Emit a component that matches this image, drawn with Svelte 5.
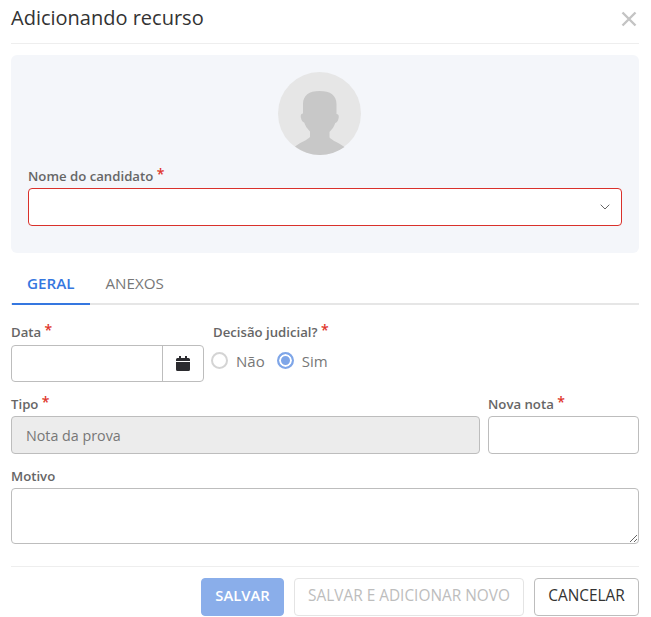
<script lang="ts">
	let decisao = $state('sim');
	let tab = $state('geral');
</script>

<div class="modal">
	<header class="modal-header">
		<h2 class="modal-title">Adicionando recurso</h2>
		<button class="close-btn" aria-label="Fechar">
			<svg width="16" height="16" viewBox="0 0 16 16">
				<path d="M1.500 1.500l13 13M14.500 1.500l-13 13" stroke="#c4c4c4" stroke-width="2.400" fill="none" />
			</svg>
		</button>
	</header>

	<section class="candidate">
		<div class="avatar">
			<svg width="83" height="83" viewBox="0 0 83 83">
				<circle cx="41.500" cy="41.500" r="41.500" fill="#e6e6e6" />
				<path
					d="M41.500 19c-10.500 0-16.500 4.500-16.500 13v9.500c-2 0-2.600 1.800-2.100 4.300.5 2.700 1.700 4.400 3.300 4.800 1 3.200 3 6.300 5.800 8.900v5.500c-2.500 3-9 5-15 9.500A41.500 41.500 0 0 0 66.500 75c-6-4.500-12.500-6.500-15-9.500v-5.500c2.800-2.600 4.800-5.700 5.800-8.900 1.600-.4 2.800-2.100 3.300-4.800.5-2.500-.1-4.300-2.100-4.300V32c0-8.500-6-13-17-13z"
					fill="#c8c8c8"
				/>
			</svg>
		</div>
		<div class="field">
			<span class="label">Nome do candidato <em>*</em></span>
			<div class="select">
				<svg width="10" height="6" viewBox="0 0 10 6">
					<path d="M.7.7L5 5l4.300-4.300" stroke="#666" stroke-width="1" fill="none" />
				</svg>
			</div>
		</div>
	</section>

	<nav class="tabs">
		<button class="tab" class:active={tab === 'geral'} onclick={() => (tab = 'geral')}>GERAL</button>
		<button class="tab" class:active={tab === 'anexos'} onclick={() => (tab = 'anexos')}>ANEXOS</button>
	</nav>

	<div class="form">
		<div class="row first">
			<div class="field data">
				<span class="label">Data <em>*</em></span>
				<div class="date-input">
					<input type="text" />
					<span class="date-btn">
						<svg width="14" height="15" viewBox="0 0 14 15">
							<path d="M3 0h2v2h4V0h2v2h1.500A1.500 1.500 0 0 1 14 3.500V5H0V3.500A1.500 1.500 0 0 1 1.500 2H3z M0 6h14v7.500a1.500 1.500 0 0 1-1.500 1.500h-11A1.500 1.500 0 0 1 0 13.500z" fill="#2b2b2f" />
						</svg>
					</span>
				</div>
			</div>
			<div class="field">
				<span class="label">Decisão judicial? <em>*</em></span>
				<div class="radios">
					<label class="radio">
						<input type="radio" bind:group={decisao} value="nao" />
						<span class="dot"></span>
						Não
					</label>
					<label class="radio">
						<input type="radio" bind:group={decisao} value="sim" />
						<span class="dot"></span>
						Sim
					</label>
				</div>
			</div>
		</div>

		<div class="row">
			<div class="field grow">
				<span class="label">Tipo <em>*</em></span>
				<input class="text-input disabled" type="text" value="Nota da prova" disabled />
			</div>
			<div class="field nota">
				<span class="label">Nova nota <em>*</em></span>
				<input class="text-input" type="text" />
			</div>
		</div>

		<div class="field">
			<span class="label">Motivo</span>
			<textarea class="motivo"></textarea>
		</div>
	</div>

	<footer class="modal-footer">
		<button class="btn primary">SALVAR</button>
		<button class="btn ghost">SALVAR E ADICIONAR NOVO</button>
		<button class="btn">CANCELAR</button>
	</footer>
</div>

<style>
	:global(body) {
		margin: 0;
		background: #fff;
	}

	.modal {
		width: 628px;
		height: 617px;
		overflow: hidden;
		padding: 0 12px 0 11px;
		font-family: 'Open Sans', sans-serif;
		color: #333;
	}

	button {
		font-family: inherit;
		cursor: pointer;
	}

	.modal-header {
		display: flex;
		align-items: center;
		justify-content: space-between;
		height: 44px;
		padding-bottom: 9px;
		box-sizing: border-box;
		border-bottom: 1px solid #eeeeee;
	}

	.modal-title {
		margin: 0;
		font-size: 20px;
		font-weight: 400;
		color: #333;
	}

	.close-btn {
		display: flex;
		background: none;
		border: none;
		padding: 0;
		margin-right: 2px;
		margin-top: 4px;
	}

	.candidate {
		margin-top: 11px;
		height: 198px;
		box-sizing: border-box;
		padding: 17px 17px 0;
		background: #f4f6fa;
		border-radius: 6px;
	}

	.avatar {
		display: flex;
		justify-content: center;
		margin-bottom: 12px;
		padding-right: 11px;
	}

	.field {
		display: flex;
		flex-direction: column;
	}

	.label {
		height: 21px;
		font-size: 13.2px;
		font-weight: 600;
		line-height: 18px;
		color: #666;
	}

	.first .label {
		height: 22px;
	}

	.label em {
		font-style: normal;
		font-size: 14px;
		line-height: 10px;
		color: #e0352b;
		vertical-align: 2px;
	}

	.select {
		display: flex;
		align-items: center;
		justify-content: flex-end;
		height: 38px;
		box-sizing: border-box;
		padding-right: 11px;
		background: #fff;
		border: 1px solid #d9312b;
		border-radius: 4px;
	}

	.tabs {
		display: flex;
		margin-top: 13px;
		height: 39px;
		box-sizing: border-box;
		border-bottom: 2px solid #e6e6e6;
	}

	.tab {
		height: 39px;
		padding: 0 15px 4px;
		margin-right: 1px;
		background: none;
		border: none;
		border-bottom: 2px solid transparent;
		font-size: 15.2px;
		line-height: 20px;
		font-weight: 400;
		color: #777;
	}

	.tab.active {
		margin-left: 1px;
		font-weight: 600;
		color: #3577e0;
		border-bottom-color: #3577e0;
	}

	.form {
		display: flex;
		flex-direction: column;
		margin-top: 18px;
	}

	.row {
		display: flex;
		gap: 8px;
		margin-bottom: 13px;
	}

	.row.first {
		gap: 9px;
		margin-bottom: 13px;
	}

	.data {
		width: 193px;
	}

	.grow {
		flex: 1;
	}

	.nota {
		width: 151px;
	}

	.date-input {
		display: flex;
		height: 37px;
		box-sizing: border-box;
		border: 1px solid #bdbdbd;
		border-radius: 4px;
	}

	.date-input input {
		flex: 1;
		min-width: 0;
		border: none;
		outline: none;
		background: none;
	}

	.date-btn {
		display: flex;
		align-items: center;
		justify-content: center;
		box-sizing: border-box;
		width: 41px;
		border-left: 1px solid #bdbdbd;
	}

	.radios {
		display: flex;
		gap: 12px;
		height: 37px;
		align-items: center;
		margin-top: -3px;
		margin-left: -2px;
	}

	.radio {
		display: flex;
		align-items: center;
		gap: 8px;
		font-size: 15px;
		line-height: 18px;
		color: #777;
	}

	.radio input {
		display: none;
	}

	.dot {
		width: 17px;
		height: 17px;
		box-sizing: border-box;
		border: 2px solid #d4d4d4;
		border-radius: 50%;
		background: #fff;
	}

	.radio input:checked + .dot {
		border-color: #7fa6e8;
		background: #7fa6e8;
		box-shadow: inset 0 0 0 2px #fff;
	}

	.text-input {
		height: 38px;
		box-sizing: border-box;
		padding: 0 14px;
		border: 1px solid #bdbdbd;
		border-radius: 4px;
		font-family: inherit;
		font-size: 14.3px;
		outline: none;
		width: 100%;
	}

	.text-input.disabled {
		background: #ececec;
		color: #777;
	}

	.motivo {
		display: block;
		height: 56px;
		box-sizing: border-box;
		border: 1px solid #bdbdbd;
		border-radius: 4px;
		outline: none;
		width: 100%;
	}

	.modal-footer {
		display: flex;
		justify-content: flex-end;
		gap: 10px;
		margin-top: 22px;
		padding-top: 11px;
		border-top: 1px solid #eeeeee;
	}

	.btn {
		height: 38px;
		padding: 0 0 3px;
		background: #fff;
		border: 1px solid #bdbdbd;
		border-radius: 4px;
		font-size: 15.4px;
		line-height: 20px;
		color: #333;
		width: 105px;
	}

	.btn.primary {
		width: 83px;
		padding-bottom: 5px;
		background: #8aaeea;
		border-color: #8aaeea;
		color: #fff;
		font-weight: 600;
		font-size: 14.8px;
	}

	.btn.ghost {
		width: 230px;
		border-color: #e4e4e4;
		color: #bdbdbd;
	}
</style>
